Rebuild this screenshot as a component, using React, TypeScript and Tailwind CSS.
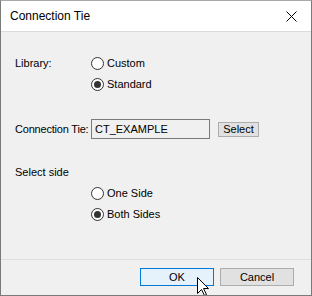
import React from "react";

const font = { fontFamily: '"Liberation Sans", Arial, sans-serif' };

function Radio({ checked, label }: { checked?: boolean; label: string }) {
  return (
    <div className="flex h-[21px] items-center">
      <div className="flex h-[13px] w-[13px] items-center justify-center rounded-full border border-[#333333] bg-white">
        {checked && <div className="h-[7px] w-[7px] rounded-full bg-[#333333]" />}
      </div>
      <span className="ml-[3px] text-[11px] text-black">{label}</span>
    </div>
  );
}

export default function App() {
  return (
    <div
      style={font}
      className="relative flex h-[296px] w-[312px] flex-col overflow-hidden border border-[#7a7a7a] border-t-[#a8a8a8] bg-[#f0f0f0] text-black"
    >
      <div className="flex h-[31px] shrink-0 items-center justify-between border-b border-[#dadada] bg-white pl-[9px] pr-[9px]">
        <span className="text-[12px] text-black">Connection Tie</span>
        <svg width="11" height="11" viewBox="0 0 11 11" className="mr-[5px]">
          <path d="M0.5 0.5 L10.5 10.5 M10.5 0.5 L0.5 10.5" stroke="#000" strokeWidth="1" />
        </svg>
      </div>

      <div className="flex h-[227px] shrink-0 flex-col pl-[14px] pt-[21px]">
        <div className="flex">
          <div className="flex h-[21px] w-[76px] items-center text-[11px]">Library:</div>
          <div className="flex flex-col">
            <Radio label="Custom" />
            <Radio label="Standard" checked />
          </div>
        </div>

        <div className="mt-[24px] flex h-[20px] items-center">
          <div className="w-[76px] whitespace-nowrap text-[11px] tracking-[-0.2px]">Connection Tie:</div>
          <div className="flex h-[20px] w-[119px] items-center border border-[#7a7a7a] bg-[#f0f0f0] pl-[3px] text-[11px]">
            CT_EXAMPLE
          </div>
          <button className="ml-[8px] flex h-[15px] w-[41px] items-center justify-center border border-[#adadad] bg-[#e1e1e1] text-[11px] leading-none">
            Select
          </button>
        </div>

        <div className="mt-[23px] flex h-[21px] items-center text-[11px]">Select side</div>
        <div className="flex flex-col pl-[76px]">
          <Radio label="One Side" />
          <Radio label="Both Sides" checked />
        </div>
      </div>

      <div className="flex flex-1 items-start justify-end gap-[6px] border-t border-[#dfdfdf] pr-[17px] pt-[8px]">
        <button className="flex h-[18px] w-[74px] items-center justify-center border border-[#0078d7] bg-[#e5f1fb] text-[11px] leading-none">
          OK
        </button>
        <button className="flex h-[18px] w-[74px] items-center justify-center border border-[#adadad] bg-[#e1e1e1] text-[11px] leading-none">
          Cancel
        </button>
      </div>

      <svg
        width="13"
        height="20"
        viewBox="0 0 13 20"
        className="absolute left-[196px] top-[276px]"
      >
        <path
          d="M0.5 0.5 L0.5 16.5 L4.5 12.5 L7.5 18.5 L9.5 17.5 L6.5 11.5 L11.5 11.5 Z"
          fill="#fff"
          stroke="#000"
          strokeWidth="1"
          strokeLinejoin="miter"
        />
      </svg>
    </div>
  );
}
